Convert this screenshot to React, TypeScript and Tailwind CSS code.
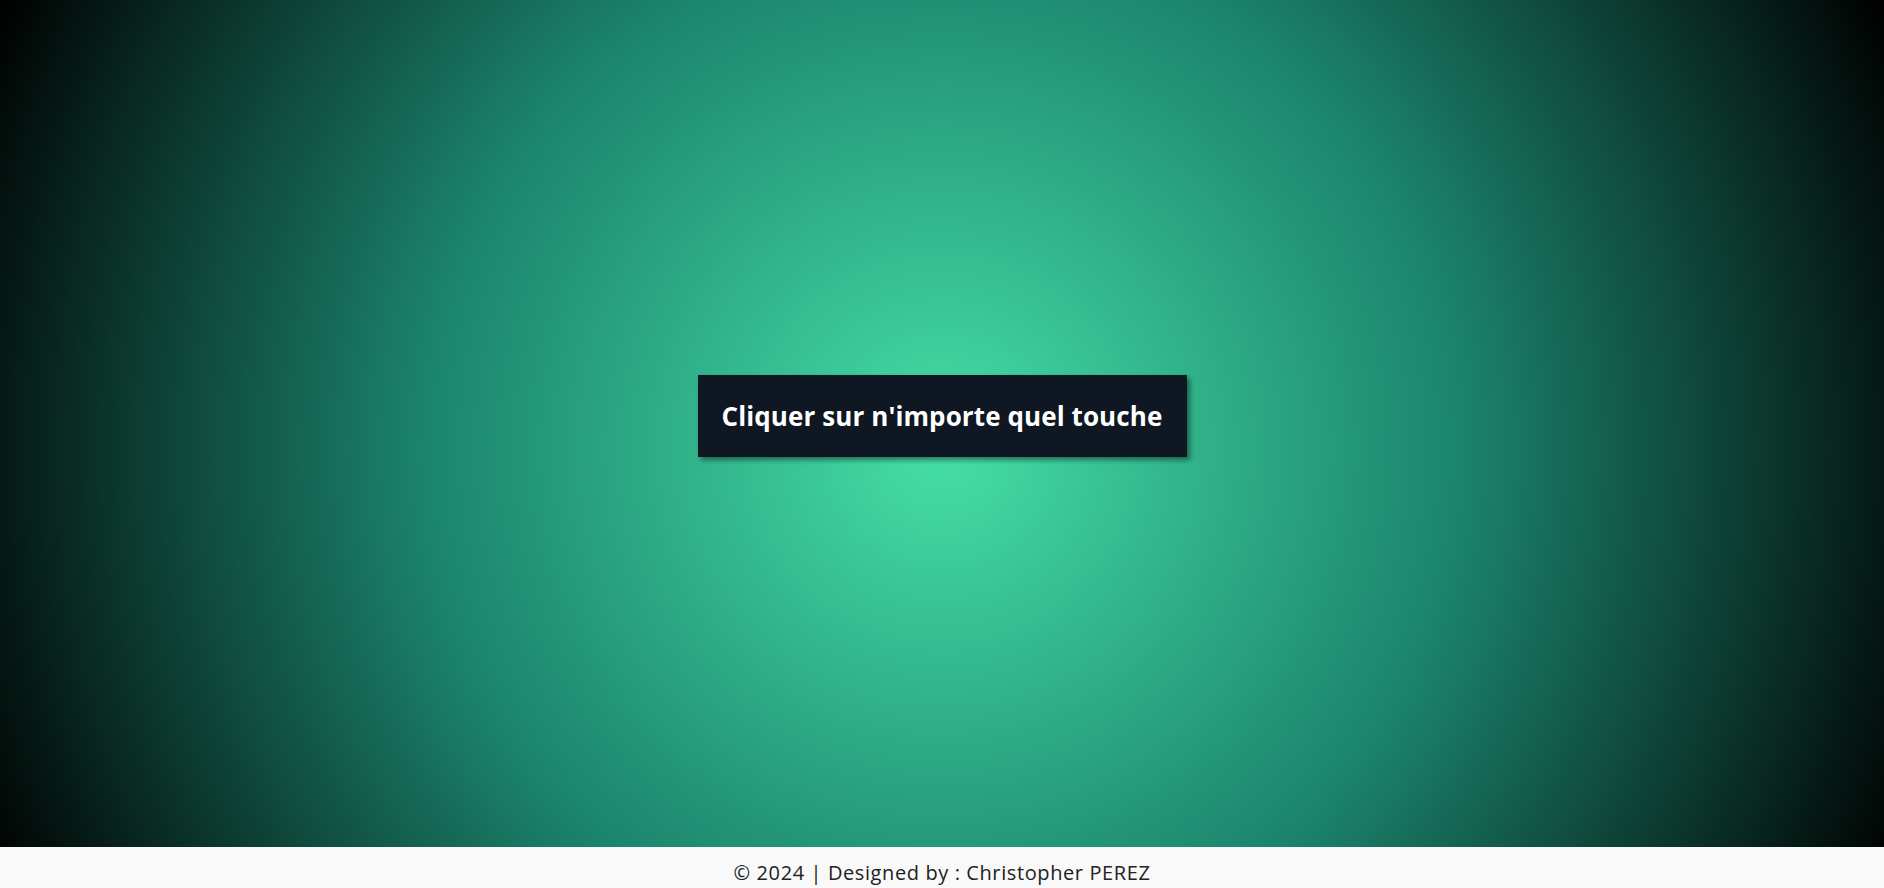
export default function App() {
  return (
    <div className="flex h-[888px] w-full flex-col font-['Open_Sans',sans-serif]">
      <main className="flex h-[847px] items-center justify-center bg-[radial-gradient(circle_at_50%_53%,#46dfa7_0%,#1b836c_50%,#000_100%)] pb-[15px]">
        <button className="flex h-[82px] w-[489px] items-center justify-center bg-[#0f1723] text-[26px] font-bold tracking-[0.1px] text-white shadow-[3px_3px_5px_rgba(0,0,0,0.45)]">
          Cliquer sur n'importe quel touche
        </button>
      </main>
      <footer className="flex h-[41px] items-center justify-center bg-[#f9f9f9] pt-[11px] text-[20px] tracking-[0.6px] text-[#222]">
        © 2024 | Designed by : Christopher PEREZ
      </footer>
    </div>
  );
}
